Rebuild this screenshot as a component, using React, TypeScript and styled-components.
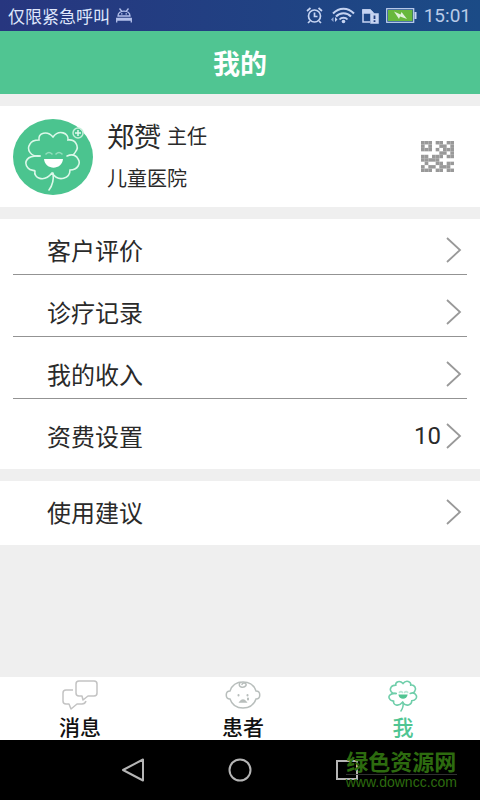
import React from "react";
import styled, { createGlobalStyle } from "styled-components";

const Global = createGlobalStyle`
  * { box-sizing: border-box; }
  body { margin: 0; background: #efefef; font-family: "Noto Sans CJK SC", sans-serif; color: #2a2a2a; }
  button { border: 0; padding: 0; background: none; font: inherit; color: inherit; cursor: pointer; }
  svg { display: block; flex: none; }
`;

const Screen = styled.div`
  min-height: 100vh;
  display: flex;
  flex-direction: column;
`;

const StatusBar = styled.div`
  height: 31px;
  padding: 0 9px 0 8px;
  display: flex;
  align-items: center;
  color: #dfe6fb;
  background: linear-gradient(90deg, #27367f, #1b4b86);
`;

const Carrier = styled.span`
  font-size: 17px;
  line-height: 30px;
  margin-right: 6px;
`;

const StatusIcons = styled.div`
  margin-left: auto;
  display: flex;
  align-items: center;
  gap: 7px;
`;

const Clock = styled.time`
  font: 19px/32px Roboto, sans-serif;
  color: #b9cbe8;
`;

const Header = styled.header`
  height: 63px;
  background: #50c592;
  text-align: center;
`;

const Title = styled.h1`
  margin: 0;
  font-size: 27px;
  line-height: 64px;
  font-weight: 700;
  color: #fff;
`;

const Main = styled.main`
  flex: 1;
  padding: 12px 0;
  display: flex;
  flex-direction: column;
  gap: 12px;
`;

const Profile = styled.section`
  height: 101px;
  padding: 0 26px 0 13px;
  background: #fff;
  display: flex;
  align-items: center;
`;

const Info = styled.div`
  flex: 1;
  margin-left: 14px;
  padding-bottom: 5px;
`;

const NameLine = styled.div`
  display: flex;
  align-items: center;
  gap: 6px;
`;

const Name = styled.span`
  font-size: 27px;
  line-height: 48px;
`;

const Detail = styled.span`
  display: block;
  font-size: 20px;
  line-height: 36px;
`;

const Group = styled.section`
  padding: 7px 13px 8px;
  background: #fff;
  display: flex;
  flex-direction: column;
  gap: 13px;
`;

const Row = styled.button`
  height: 49px;
  padding: 0 5px 0 34px;
  display: flex;
  align-items: center;
  border-bottom: 1px solid transparent;
  font-size: 24px;
  text-align: left;

  &:not(:last-child) { border-bottom-color: #939393; }
`;

const RowLabel = styled.span`
  flex: 1;
  line-height: 36px;
`;

const RowValue = styled.span`
  font: 24px/36px Roboto, sans-serif;
  margin-right: 5px;
`;

const Tabs = styled.nav`
  height: 63px;
  background: #fff;
  display: grid;
  grid-template-columns: 160fr 166fr 154fr;
`;

const Tab = styled.button<{ $active?: boolean }>`
  display: flex;
  flex-direction: column;
  align-items: center;
  padding-top: 2px;
  font-size: 21px;
  line-height: 27px;
  font-weight: 500;
  color: ${(p) => (p.$active ? "#50c592" : "#111")};
`;

const SystemBar = styled.div`
  position: relative;
  height: 60px;
  padding: 0 80px;
  background: #000;
  display: grid;
  grid-template-columns: repeat(3, 1fr);
`;

const SystemButton = styled.button`
  display: flex;
  align-items: center;
  justify-content: center;
`;

const Watermark = styled.div`
  position: absolute;
  right: 23px;
  top: 7px;
  text-align: center;
  color: #2d6b0f;
  pointer-events: none;
`;

const MarkName = styled.div`
  font-size: 22px;
  line-height: 27px;
  font-weight: 700;
  border-bottom: 1px solid #303030;
`;

const MarkUrl = styled.div`
  font: 14px/15px "Liberation Sans", sans-serif;
`;

const CloverLines = () => (
  <>
    <path d="M27 37C18 38 13 31 17 25C19 21 23 21 26 21C25 14 34 11 40 18C46 10 56 14 55 21C63 20 66 28 63 32C62 34 61 35 60 36" />
    <path d="M27 37C14 36 10 43 15 49C17 52 21 51 22 52C20 59 31 64 39 54C46 64 57 59 57 51C65 51 68 44 65 40C63 36 59 35 54 37" />
    <path d="M40 54C41 61 39 67 36 71" />
    <path d="M33 35q3-3 6 0M43 35q3-3 6 0" strokeOpacity=".5" />
  </>
);

const Avatar = () => (
  <svg width="80" height="76" viewBox="0 0 80 76" role="img" aria-label="头像">
    <ellipse cx="40" cy="38" rx="40" ry="38" fill="#4bc48f" />
    <g fill="none" stroke="#dcf8e9" strokeWidth="1.6" strokeLinecap="round">
      <CloverLines />
    </g>
    <path d="M31 40h19c-1 11.500-18 11.500-19 0z" fill="#fff" />
    <circle cx="65" cy="14" r="5" fill="none" stroke="#c5f0da" strokeWidth="1.500" />
    <path d="M65 11v6M62 14h6" stroke="#e5faef" strokeWidth="1.500" />
  </svg>
);

const QR_CELLS = [
  "111011011",
  "101001101",
  "111010111",
  "000001101",
  "110111011",
  "111110000",
  "010011011",
  "101101110",
  "111011011",
];

const QrIcon = () => (
  <svg width="33" height="31" viewBox="0 0 9 9" preserveAspectRatio="none" fill="#999">
    {QR_CELLS.flatMap((line, y) =>
      [...line].map((c, x) => (c === "1" ? <rect key={`${x}-${y}`} x={x} y={y} width="1" height="1" /> : null)),
    )}
  </svg>
);

const Chevron = () => (
  <svg width="16" height="26" viewBox="0 0 16 26" fill="none" stroke="#999" strokeWidth="1.8">
    <path d="M1 1l13 12L1 25" />
  </svg>
);

const AndroidIcon = () => (
  <svg width="16" height="15" viewBox="0 0 16 15" fill="none" stroke="#b3c0ea" strokeWidth="1.300">
    <path d="M2 8C2 1.500 14 1.500 14 8zM3.500 .5l2 2.500M12.500 .5l-2 2.500M5 5.800h1.500M9.500 5.800H11" />
    <path d="M.7 14.500v-4h14.600v4M.7 12h14.600" />
  </svg>
);

const AlarmIcon = () => (
  <svg width="17" height="17" viewBox="0 0 17 17" fill="none" stroke="#c6d4f2" strokeWidth="1.700">
    <circle cx="8.500" cy="9" r="6" />
    <path d="M8.500 5.500V9.500h3M1 4l3.500-3M16 4l-3.500-3M4 14l-2 2M13 14l2 2" />
  </svg>
);

const WifiIcon = () => (
  <svg width="25" height="17" viewBox="0 0 25 17" fill="none" stroke="#c6d4f2" strokeWidth="2">
    <path d="M3 6.500C9 0 18 0 24 6.500M6 9.500c4-4.500 11-4.500 15 0M9.500 12.500c2-2.500 6-2.500 8 0" />
    <circle cx="13.500" cy="14.500" r="1.800" fill="#c6d4f2" stroke="none" />
    <path d="M3.500 10v5L1 12.500z" fill="#8da3d2" stroke="none" />
    <path d="M5 10v5l2.500-2.500z" fill="#c6d4f2" stroke="none" />
  </svg>
);

const SimIcon = () => (
  <svg width="17" height="16" viewBox="0 0 17 16" fill="none" stroke="#c6d4f2" strokeWidth="1.500">
    <path d="M8 14H1V2h7l3 3" />
    <path d="M1 2h7l3 3H1z" fill="#c6d4f2" />
    <rect x="9" y="6" width="7" height="9" fill="#c6d4f2" />
    <path d="M12.500 7.500v3.500M12.500 12.200V14" stroke="#23407f" strokeWidth="1.800" />
  </svg>
);

const BatteryIcon = () => (
  <svg width="31" height="15" viewBox="0 0 31 15">
    <rect x=".7" y=".7" width="27" height="13.600" fill="#1b4b86" stroke="#c6d4f2" strokeWidth="1.200" />
    <rect x="2" y="2" width="24.500" height="11" fill="#68b83d" />
    <rect x="28.500" y="4" width="2" height="7" fill="#c6d4f2" />
    <path d="M8 3.500l6.500 3 1-2.500 5.500 7-7-2.500-1 2.500z" fill="#e1f2dc" />
  </svg>
);

const MessageIcon = () => (
  <svg width="36" height="34" viewBox="0 0 36 34" fill="none" stroke="#c3c3c3" strokeWidth="1.500" strokeLinejoin="round">
    <path d="M17 2h15q3 0 3 3v9q0 3-3 3h-6l-5 4-1-4h-3q-3 0-3-3V5q0-3 3-3z" />
    <path d="M11 11H4q-3 0-3 3v8q0 3 3 3h3l2 5 6-5h5q3 0 4-3" />
  </svg>
);

const BabyIcon = () => (
  <svg width="36" height="34" viewBox="0 0 36 34" fill="none" stroke="#b8bebc" strokeWidth="1.500" strokeLinecap="round">
    <path d="M5 12C7 6 12 3 18 3s11 3 13 9c5 0 5 8 0 8-2 6-7 9-13 9S7 26 5 20c-5 0-5-8 0-8z" />
    <path d="M15 3.500c-3 5 4 6 6 3 1-3-4-3-4-1" />
    <path d="M15 23q3-4 6 0z" fill="#b8bebc" />
    <path d="M13.500 16v.5M22.500 16v.5M23 19.500v1" strokeWidth="2" />
  </svg>
);

const CloverIcon = () => (
  <svg width="30" height="34" viewBox="11 10 58 64" fill="none" stroke="#6fceaa" strokeWidth="3" strokeLinecap="round">
    <CloverLines />
    <path d="M31 39h18c-1 11-17 11-18 0z" fill="#50c592" stroke="none" />
  </svg>
);

const SERVICES = [
  { label: "客户评价" },
  { label: "诊疗记录" },
  { label: "我的收入" },
  { label: "资费设置", value: "10" },
];

const MenuRow = ({ label, value }: { label: string; value?: string }) => (
  <Row type="button">
    <RowLabel>{label}</RowLabel>
    {value && <RowValue>{value}</RowValue>}
    <Chevron />
  </Row>
);

export default function App() {
  return (
    <Screen>
      <Global />
      <StatusBar>
        <Carrier>仅限紧急呼叫</Carrier>
        <AndroidIcon />
        <StatusIcons>
          <AlarmIcon />
          <WifiIcon />
          <SimIcon />
          <BatteryIcon />
          <Clock>15:01</Clock>
        </StatusIcons>
      </StatusBar>
      <Header>
        <Title>我的</Title>
      </Header>
      <Main>
        <Profile>
          <Avatar />
          <Info>
            <NameLine>
              <Name>郑赟</Name>
              <Detail>主任</Detail>
            </NameLine>
            <Detail>儿童医院</Detail>
          </Info>
          <button type="button" aria-label="二维码">
            <QrIcon />
          </button>
        </Profile>
        <Group>
          {SERVICES.map((s) => (
            <MenuRow key={s.label} {...s} />
          ))}
        </Group>
        <Group>
          <MenuRow label="使用建议" />
        </Group>
      </Main>
      <Tabs>
        <Tab type="button">
          <MessageIcon />
          消息
        </Tab>
        <Tab type="button">
          <BabyIcon />
          患者
        </Tab>
        <Tab type="button" $active aria-current="page">
          <CloverIcon />
          我
        </Tab>
      </Tabs>
      <SystemBar>
        <SystemButton type="button" aria-label="返回">
          <svg width="24" height="24" viewBox="0 0 24 24" fill="none" stroke="#b5b5b5" strokeWidth="2" strokeLinejoin="round">
            <path d="M22 1.500v21L2 12z" />
          </svg>
        </SystemButton>
        <SystemButton type="button" aria-label="主屏幕">
          <svg width="24" height="24" viewBox="0 0 24 24" fill="none" stroke="#b5b5b5" strokeWidth="2">
            <circle cx="12" cy="12" r="10.500" />
          </svg>
        </SystemButton>
        <SystemButton type="button" aria-label="最近任务">
          <svg width="24" height="24" viewBox="0 0 24 24" fill="none" stroke="#b5b5b5" strokeWidth="2">
            <rect x="2" y="3" width="20" height="18" />
          </svg>
        </SystemButton>
        <Watermark>
          <MarkName>绿色资源网</MarkName>
          <MarkUrl>www.downcc.com</MarkUrl>
        </Watermark>
      </SystemBar>
    </Screen>
  );
}
